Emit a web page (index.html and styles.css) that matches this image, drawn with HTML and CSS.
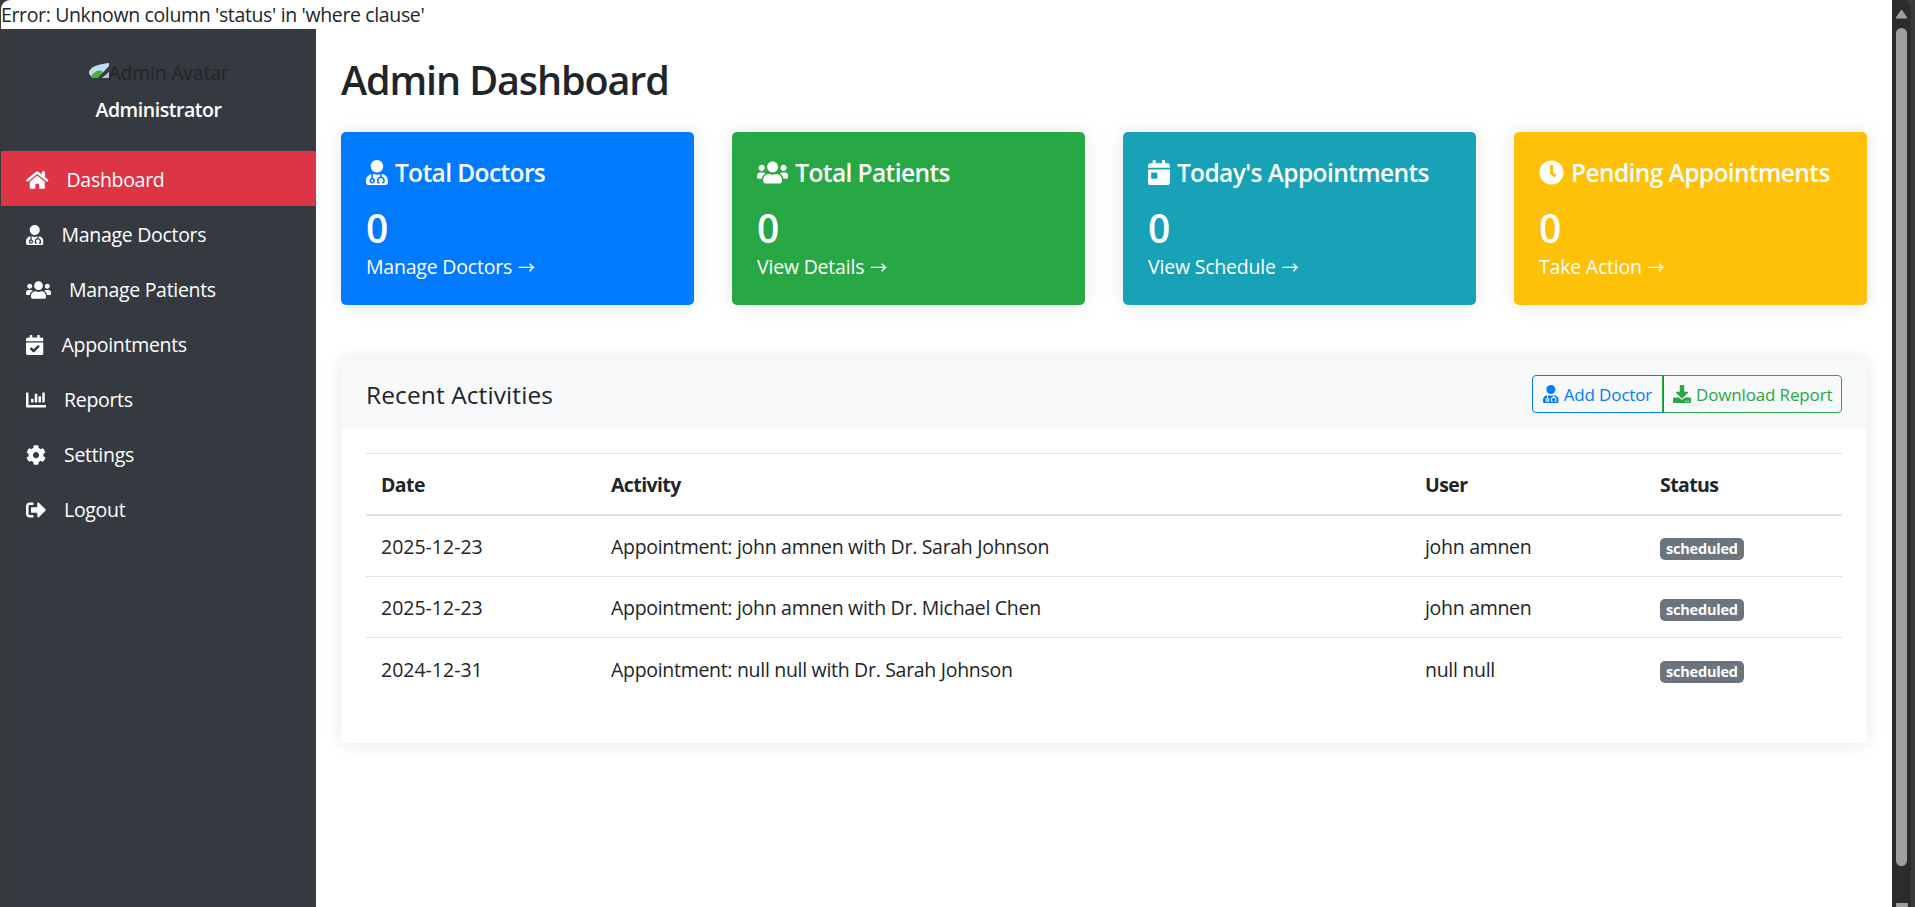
FILE: index.html
```
<!DOCTYPE html>
<html lang="en">
<head>
<meta charset="utf-8">
<title>Admin Dashboard</title>
<link rel="stylesheet" href="styles.css">
</head>
<body>
<svg class="sprite" aria-hidden="true">
  <symbol id="home" viewBox="0 0 576 512"><path d="M280.37 148.26L96 300.11V464a16 16 0 0 0 16 16l112.06-.29a16 16 0 0 0 15.92-16V368a16 16 0 0 1 16-16h64a16 16 0 0 1 16 16v95.64a16 16 0 0 0 16 16.05L464 480a16 16 0 0 0 16-16V300L295.67 148.26a12.19 12.19 0 0 0-15.3 0zM571.6 251.47L488 182.56V44.05a12 12 0 0 0-12-12h-56a12 12 0 0 0-12 12v72.61L318.47 43a48 48 0 0 0-61 0L4.34 251.47a12 12 0 0 0-1.6 16.9l25.5 31A12 12 0 0 0 45.15 301l235.22-193.74a12.19 12.19 0 0 1 15.3 0L530.9 301a12 12 0 0 0 16.9-1.6l25.5-31a12 12 0 0 0-1.7-16.93z"/></symbol>
  <symbol id="doctor" viewBox="0 0 448 512"><path d="M224 256c70.7 0 128-57.3 128-128S294.7 0 224 0 96 57.3 96 128s57.3 128 128 128zM104 424c0 13.3 10.7 24 24 24s24-10.7 24-24-10.7-24-24-24-24 10.7-24 24zm216-135.4v49c36.5 7.4 64 39.8 64 78.4v41.7c0 7.6-5.4 14.2-12.9 15.7l-32.2 6.4c-4.3.9-8.5-1.9-9.4-6.3l-3.1-15.7c-.9-4.3 1.9-8.6 6.3-9.4l19.3-3.9V416c0-62.8-96-65.1-96 1.9v26.7l19.3 3.9c4.3.9 7.1 5.1 6.3 9.4l-3.1 15.7c-.9 4.3-5.1 7.1-9.4 6.3l-31.2-4.2c-7.9-1.1-13.8-7.8-13.8-15.9V416c0-38.6 27.5-70.9 64-78.4v-45.2c-2.2.7-4.4 1.1-6.6 1.9-18 6.3-37.3 9.8-57.4 9.8s-39.4-3.5-57.4-9.8c-7.4-2.6-14.9-4.2-22.6-5.2v81.6c23.1 6.9 40 28.1 40 53.4 0 30.9-25.1 56-56 56s-56-25.1-56-56c0-25.3 16.9-46.5 40-53.4v-80.4C48.5 301 0 355.8 0 422.4v44.8C0 491.9 20.1 512 44.8 512h358.4c24.7 0 44.8-20.1 44.8-44.8v-44.8c0-72-56.8-130.3-128-133.8z"/></symbol>
  <symbol id="users" viewBox="0 0 640 512"><path d="M96 224c35.3 0 64-28.7 64-64s-28.7-64-64-64-64 28.7-64 64 28.7 64 64 64zm448 0c35.3 0 64-28.7 64-64s-28.7-64-64-64-64 28.7-64 64 28.7 64 64 64zm32 32h-64c-17.6 0-33.5 7.1-45.1 18.6 40.3 22.1 68.9 62 75.1 109.4h66c17.7 0 32-14.3 32-32v-32c0-35.3-28.7-64-64-64zm-256 0c61.9 0 112-50.1 112-112S381.9 32 320 32 208 82.1 208 144s50.1 112 112 112zm76.8 32h-8.3c-20.8 10-43.9 16-68.5 16s-47.6-6-68.5-16h-8.3C179.6 288 128 339.6 128 403.2V432c0 26.5 21.5 48 48 48h288c26.5 0 48-21.5 48-48v-28.8c0-63.6-51.6-115.2-115.2-115.2zm-223.7-13.4C161.5 263.1 145.6 256 128 256H64c-35.3 0-64 28.7-64 64v32c0 17.7 14.3 32 32 32h65.9c6.3-47.4 34.9-87.3 75.2-109.4z"/></symbol>
  <symbol id="calendar-check" viewBox="0 0 448 512"><path d="M436 160H12c-6.627 0-12-5.373-12-12v-36c0-26.51 21.49-48 48-48h48V12c0-6.627 5.373-12 12-12h40c6.627 0 12 5.373 12 12v52h128V12c0-6.627 5.373-12 12-12h40c6.627 0 12 5.373 12 12v52h48c26.51 0 48 21.49 48 48v36c0 6.627-5.373 12-12 12zM12 192h424c6.627 0 12 5.373 12 12v260c0 26.51-21.49 48-48 48H48c-26.51 0-48-21.49-48-48V204c0-6.627 5.373-12 12-12zm333.296 95.947l-28.169-28.398c-4.667-4.705-12.265-4.736-16.97-.068L194.12 364.665l-45.98-46.352c-4.667-4.705-12.266-4.736-16.971-.068l-28.397 28.17c-4.705 4.667-4.736 12.265-.068 16.97l82.601 83.269c4.667 4.705 12.265 4.736 16.97.068l142.953-141.805c4.705-4.667 4.736-12.265.068-16.97z"/></symbol>
  <symbol id="calendar-day" viewBox="0 0 448 512"><path d="M0 464c0 26.5 21.5 48 48 48h352c26.5 0 48-21.5 48-48V192H0v272zm64-192c0-8.8 7.2-16 16-16h96c8.8 0 16 7.2 16 16v96c0 8.8-7.2 16-16 16H80c-8.8 0-16-7.2-16-16v-96zM400 64h-48V16c0-8.8-7.2-16-16-16h-32c-8.8 0-16 7.2-16 16v48H160V16c0-8.8-7.2-16-16-16h-32c-8.8 0-16 7.2-16 16v48H48C21.5 64 0 85.5 0 112v48h448v-48c0-26.5-21.5-48-48-48z"/></symbol>
  <symbol id="chart" viewBox="0 0 512 512"><path d="M332.8 320h38.4c6.4 0 12.8-6.4 12.8-12.8V172.8c0-6.4-6.4-12.8-12.8-12.8h-38.4c-6.4 0-12.8 6.4-12.8 12.8v134.4c0 6.4 6.4 12.8 12.8 12.8zm96 0h38.4c6.4 0 12.8-6.4 12.8-12.8V76.8c0-6.4-6.4-12.8-12.8-12.8h-38.4c-6.4 0-12.8 6.4-12.8 12.8v230.4c0 6.4 6.4 12.8 12.8 12.8zm-288 0h38.4c6.4 0 12.8-6.4 12.8-12.8v-70.4c0-6.4-6.4-12.8-12.8-12.8h-38.4c-6.4 0-12.8 6.4-12.8 12.8v70.4c0 6.4 6.4 12.8 12.8 12.8zm96 0h38.4c6.4 0 12.8-6.4 12.8-12.8V108.8c0-6.4-6.4-12.8-12.8-12.8h-38.4c-6.4 0-12.8 6.4-12.8 12.8v198.4c0 6.4 6.4 12.8 12.8 12.8zM496 384H64V80c0-8.84-7.16-16-16-16H16C7.16 64 0 71.16 0 80v336c0 17.67 14.33 32 32 32h464c8.84 0 16-7.16 16-16v-32c0-8.84-7.16-16-16-16z"/></symbol>
  <symbol id="cog" viewBox="0 0 512 512"><path d="M487.4 315.7l-42.6-24.6c4.3-23.2 4.3-47 0-70.2l42.6-24.6c4.9-2.8 7.1-8.6 5.5-14-11.1-35.6-30-67.8-54.7-94.6-3.8-4.1-10-5.1-14.8-2.3L380.8 110c-17.9-15.4-38.5-27.3-60.8-35.1V25.8c0-5.6-3.9-10.5-9.4-11.7-36.7-8.2-74.3-7.8-109.2 0-5.5 1.2-9.4 6.1-9.4 11.7V75c-22.2 7.9-42.8 19.8-60.8 35.1L88.7 85.5c-4.9-2.8-11-1.9-14.8 2.3-24.7 26.7-43.6 58.9-54.7 94.6-1.7 5.4.6 11.2 5.5 14L67.3 221c-4.3 23.2-4.3 47 0 70.2l-42.6 24.6c-4.9 2.8-7.1 8.6-5.5 14 11.1 35.6 30 67.8 54.7 94.6 3.8 4.1 10 5.1 14.8 2.3l42.6-24.6c17.9 15.4 38.5 27.3 60.8 35.1v49.2c0 5.6 3.9 10.5 9.4 11.7 36.7 8.2 74.3 7.8 109.2 0 5.5-1.2 9.4-6.1 9.4-11.7v-49.2c22.2-7.9 42.8-19.8 60.8-35.1l42.6 24.6c4.9 2.8 11 1.9 14.8-2.3 24.7-26.7 43.6-58.9 54.7-94.6 1.5-5.5-.7-11.3-5.6-14.1zM256 336c-44.1 0-80-35.9-80-80s35.9-80 80-80 80 35.9 80 80-35.9 80-80 80z"/></symbol>
  <symbol id="sign-out" viewBox="0 0 512 512"><path d="M497 273L329 441c-15 15-41 4.5-41-17v-96H152c-13.3 0-24-10.7-24-24v-96c0-13.3 10.7-24 24-24h136V88c0-21.4 25.9-32 41-17l168 168c9.3 9.4 9.3 24.6 0 34zM192 436v-40c0-6.6-5.4-12-12-12H96c-17.7 0-32-14.3-32-32V160c0-17.7 14.3-32 32-32h84c6.6 0 12-5.4 12-12V76c0-6.6-5.4-12-12-12H96c-53 0-96 43-96 96v192c0 53 43 96 96 96h84c6.6 0 12-5.4 12-12z"/></symbol>
  <symbol id="clock" viewBox="0 0 512 512"><path d="M256,8C119,8,8,119,8,256S119,504,256,504,504,393,504,256,393,8,256,8Zm92.49,313h0l-20,25a16,16,0,0,1-22.49,2.5h0l-67-49.72a40,40,0,0,1-15-31.23V112a16,16,0,0,1,16-16h32a16,16,0,0,1,16,16V256l58,42.5A16,16,0,0,1,348.49,321Z"/></symbol>
  <symbol id="download" viewBox="0 0 512 512"><path d="M216 0h80c13.3 0 24 10.7 24 24v168h87.7c17.8 0 26.7 21.5 14.1 34.1L269.7 378.3c-7.5 7.5-19.8 7.5-27.3 0L90.1 226.1c-12.6-12.6-3.7-34.1 14.1-34.1H192V24c0-13.3 10.7-24 24-24zm296 376v112c0 13.3-10.7 24-24 24H24c-13.3 0-24-10.7-24-24V376c0-13.3 10.7-24 24-24h146.7l49 49c20.1 20.1 52.5 20.1 72.6 0l49-49H488c13.3 0 24 10.7 24 24zm-124 88c0-11-9-20-20-20s-20 9-20 20 9 20 20 20 20-9 20-20zm64 0c0-11-9-20-20-20s-20 9-20 20 9 20 20 20 20-9 20-20z"/></symbol>
</svg>

<div class="window">
  <div class="page">
    <div class="error">Error: Unknown column 'status' in 'where clause'</div>
    <div class="layout">
      <aside class="sidebar">
        <div class="profile">
          <div class="avatar">
            <svg class="broken" viewBox="0 0 20 15"><path d="M0 9C1 4 9 1 20 0v15H4C1 13 0 11 0 9z" fill="#c6d9f5"/><path d="M2 13C6 8 10 6 14 9l-3 6H4z" fill="#4caf3a"/><path d="M20 3L9 15h4l7-6z" fill="#343a40"/><path d="M20 10v5h-6z" fill="#b8bec6"/></svg><span>Admin Avatar</span>
          </div>
          <div class="name">Administrator</div>
        </div>
        <nav class="nav">
          <a class="nav-link active"><svg class="icon w576"><use href="#home"/></svg>Dashboard</a>
          <a class="nav-link"><svg class="icon w448"><use href="#doctor"/></svg>Manage Doctors</a>
          <a class="nav-link"><svg class="icon w640"><use href="#users"/></svg>Manage Patients</a>
          <a class="nav-link"><svg class="icon w448"><use href="#calendar-check"/></svg>Appointments</a>
          <a class="nav-link"><svg class="icon w512"><use href="#chart"/></svg>Reports</a>
          <a class="nav-link"><svg class="icon w512"><use href="#cog"/></svg>Settings</a>
          <a class="nav-link"><svg class="icon w512"><use href="#sign-out"/></svg>Logout</a>
        </nav>
      </aside>
      <main class="main">
        <h1>Admin Dashboard</h1>
        <div class="stats">
          <section class="stat blue"><h5><svg class="icon w448"><use href="#doctor"/></svg>Total Doctors</h5><div class="count">0</div><a>Manage Doctors <i class="arrow">→</i></a></section>
          <section class="stat green"><h5><svg class="icon w640"><use href="#users"/></svg>Total Patients</h5><div class="count">0</div><a>View Details <i class="arrow">→</i></a></section>
          <section class="stat teal"><h5><svg class="icon w448"><use href="#calendar-day"/></svg>Today's Appointments</h5><div class="count">0</div><a>View Schedule <i class="arrow">→</i></a></section>
          <section class="stat yellow"><h5><svg class="icon w512"><use href="#clock"/></svg>Pending Appointments</h5><div class="count">0</div><a>Take Action <i class="arrow">→</i></a></section>
        </div>
        <section class="card">
          <header class="card-header">
            <h5>Recent Activities</h5>
            <div class="btn-group">
              <button class="btn primary"><svg class="icon w448"><use href="#doctor"/></svg>Add Doctor</button>
              <button class="btn success"><svg class="icon w512"><use href="#download"/></svg>Download Report</button>
            </div>
          </header>
          <div class="card-body">
            <table class="table">
              <colgroup><col class="c-date"><col class="c-activity"><col class="c-user"><col></colgroup>
              <thead><tr><th>Date</th><th>Activity</th><th>User</th><th>Status</th></tr></thead>
              <tbody>
                <tr><td class="date">2025-12-23</td><td>Appointment: john amnen with Dr. Sarah Johnson</td><td>john amnen</td><td><span class="badge">scheduled</span></td></tr>
                <tr><td class="date">2025-12-23</td><td>Appointment: john amnen with Dr. Michael Chen</td><td>john amnen</td><td><span class="badge">scheduled</span></td></tr>
                <tr><td class="date">2024-12-31</td><td>Appointment: null null with Dr. Sarah Johnson</td><td>null null</td><td><span class="badge">scheduled</span></td></tr>
              </tbody>
            </table>
          </div>
        </section>
      </main>
    </div>
  </div>
  <div class="scrollbar">
    <svg class="scroll-arrow" viewBox="0 0 13 10"><path d="M6.5 1L12 9H1z"/></svg>
    <div class="thumb"></div>
    <div class="scroll-down"></div>
  </div>
</div>
</body>
</html>
```
FILE: styles.css
```
* { box-sizing: border-box; }
body {
  margin: 0;
  height: 907px;
  overflow: hidden;
  background: #3a3a3a;
  color: #212529;
  font: 19.5px/30px "Open Sans", "Noto Sans", sans-serif;
  letter-spacing: -0.3px;
}
h1, h5 { margin: 0; }
.sprite { display: none; }
.window { display: flex; height: 907px; padding: 0 4px 0 1px; }
.page {
  flex: 1;
  display: flex;
  flex-direction: column;
  background: #fff;
  border-top-left-radius: 9px;
  overflow: hidden;
}
.error { height: 29px; line-height: 30px; letter-spacing: -0.36px; }
.layout { flex: 1; display: flex; }

.icon { height: 1em; fill: currentColor; flex: none; }
.w448 { width: .875em; }
.w512 { width: 1em; }
.w576 { width: 1.125em; }
.w640 { width: 1.25em; }

/* Sidebar */
.sidebar { width: 315px; background: #343a40; color: #fff; }
.profile {
  height: 122px;
  padding-top: 29px;
  display: flex;
  flex-direction: column;
  align-items: center;
  gap: 7px;
}
.avatar { display: flex; align-items: center; color: #212529; }
.avatar span { letter-spacing: -0.25px; }
.broken { width: 20px; height: 15px; margin-bottom: 5px; }
.name { font-weight: 600; letter-spacing: -0.45px; }
.nav-link { display: flex; align-items: center; height: 55px; padding: 2px 0 0 25px; gap: 18px; }
.nav-link .icon { font-size: 20px; }
.active { background: #dc3545; }

/* Main column */
.main { flex: 1; padding: 25px; }
h1 {
  font-size: 39.5px;
  font-weight: 600;
  line-height: 53px;
  letter-spacing: -1.1px;
  margin-bottom: 25px;
}
.stats { display: grid; grid-template-columns: repeat(4, 1fr); gap: 38px; margin-bottom: 55px; }
.stat {
  height: 173px;
  padding: 26px 25px 0;
  border-radius: 5px;
  color: #fff;
  box-shadow: 0 0 19px rgba(0, 0, 0, .1);
}
.stat h5 {
  display: flex;
  align-items: center;
  gap: 7px;
  font-size: 24.5px;
  font-weight: 600;
  letter-spacing: -0.6px;
  white-space: nowrap;
}
.stat .icon { font-size: 25px; margin-top: -2px; }
.count { margin-top: 16px; font-size: 39px; font-weight: 600; line-height: 48px; }
.stat a { display: block; letter-spacing: -0.2px; }
.arrow { font: 17px/20px "Noto Sans CJK SC", "DejaVu Sans", sans-serif; margin-left: 1px; }
.blue { background: #007bff; }
.green { background: #28a745; }
.teal { background: #17a2b8; }
.yellow { background: #ffc107; }

/* Activity card */
.card { height: 383px; border-radius: 5px; box-shadow: 0 0 19px rgba(0, 0, 0, .1); }
.card-header {
  display: flex;
  align-items: center;
  justify-content: space-between;
  height: 68px;
  padding: 0 25px;
  background: #f8f9fa;
  border-radius: 5px 5px 0 0;
}
.card-header h5 { padding-top: 2px; font-size: 24.5px; font-weight: 500; letter-spacing: 0.1px; }
.btn-group { display: flex; }
.btn {
  display: flex;
  align-items: center;
  gap: 5px;
  height: 38px;
  padding: 1px 10px 0;
  background: none;
  border: 1px solid currentColor;
  font: 17px/26px "Open Sans", sans-serif;
  letter-spacing: -0.15px;
  white-space: nowrap;
}
.btn .icon { font-size: 18px; margin-top: -2px; }
.primary { width: 132px; color: #007bff; border-radius: 4px 0 0 4px; }
.success { width: 180px; margin-left: -2px; color: #28a745; border-radius: 0 4px 4px 0; }
.card-body { padding: 25px; }
.table { width: 100%; table-layout: fixed; border-collapse: separate; border-spacing: 0; }
.c-date { width: 230px; }
.c-activity { width: 814px; }
.c-user { width: 235px; }
.table th, .table td {
  height: 61px;
  padding: 2px 15px 0;
  text-align: left;
  border-bottom: 1px solid #dee2e6;
}
.table th {
  height: 63px;
  padding-top: 1px;
  border-top: 1px solid #dee2e6;
  border-bottom: 2px solid #dee2e6;
  font-weight: 700;
  letter-spacing: -0.6px;
}
.table tr:last-child td { border-bottom: 0; }
.table .date { letter-spacing: 0; }
.badge {
  display: inline-block;
  height: 22px;
  padding: 0 6px;
  border-radius: 5px;
  background: #6c757d;
  color: #fff;
  font-size: 14.5px;
  font-weight: 700;
  line-height: 21px;
  letter-spacing: -0.2px;
}

/* Browser scrollbar */
.scrollbar {
  width: 19px;
  padding-top: 9px;
  display: flex;
  flex-direction: column;
  align-items: center;
  background: #2c2c2c;
  border-top-right-radius: 8px;
}
.scroll-arrow { width: 13px; height: 10px; fill: #9f9f9f; stroke: #9f9f9f; stroke-linejoin: round; }
.thumb { width: 11px; height: 838px; margin-top: 9px; border-radius: 6px; background: #9f9f9f; }
.scroll-down { width: 12px; height: 4px; margin-top: 37px; border-radius: 1px; background: #9f9f9f; }
```
